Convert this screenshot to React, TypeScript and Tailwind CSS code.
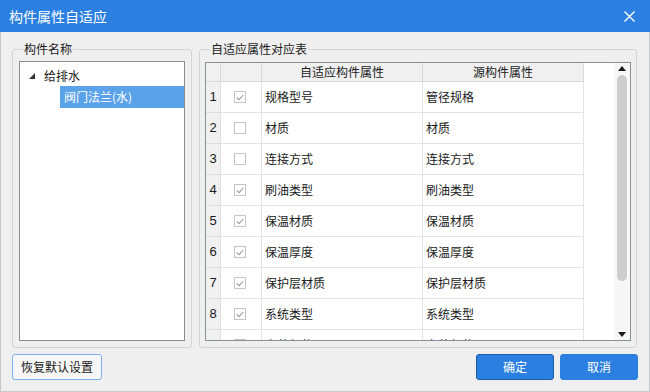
import React from "react";

const rows: { n: number; checked: boolean; target: string; source: string }[] = [
  { n: 1, checked: true, target: "规格型号", source: "管径规格" },
  { n: 2, checked: false, target: "材质", source: "材质" },
  { n: 3, checked: false, target: "连接方式", source: "连接方式" },
  { n: 4, checked: true, target: "刷油类型", source: "刷油类型" },
  { n: 5, checked: true, target: "保温材质", source: "保温材质" },
  { n: 6, checked: true, target: "保温厚度", source: "保温厚度" },
  { n: 7, checked: true, target: "保护层材质", source: "保护层材质" },
  { n: 8, checked: true, target: "系统类型", source: "系统类型" },
  { n: 9, checked: true, target: "安装部位", source: "安装部位" },
];

function CheckBox({ checked }: { checked: boolean }) {
  return (
    <div className="w-[12px] h-[12px] border border-[#c4c4c4] bg-white flex items-center justify-center">
      {checked && (
        <svg width="8" height="7" viewBox="0 0 8 7">
          <polyline points="0.8,3.4 3,5.6 7.2,1" fill="none" stroke="#9a9a9a" strokeWidth="1.1" />
        </svg>
      )}
    </div>
  );
}

export default function App() {
  return (
    <div className="w-[650px] h-[392px] bg-[#efefef] flex flex-col border-x border-b border-[#c3c8cf] text-[12px] text-[#1a1a1a] font-['Noto_Sans_CJK_SC',sans-serif]">
      {/* 标题栏 */}
      <div className="h-8 shrink-0 bg-[#2b7fe0] flex items-center justify-between pl-[9px] pr-[15px] -mx-px">
        <span className="text-white text-[14px]">构件属性自适应</span>
        <svg width="11" height="11" viewBox="0 0 11 11">
          <path d="M0.5 0.5 L10.5 10.5 M10.5 0.5 L0.5 10.5" stroke="white" strokeWidth="1.4" />
        </svg>
      </div>

      <div className="flex pt-2 pl-[11px] pr-[12px] gap-[7px]">
        {/* 构件名称 */}
        <fieldset className="w-[180px] h-[308px] border border-[#d4d4d4] rounded-[3px] pl-[6px] pr-[6px]">
          <legend className="ml-[4px] px-[1px] leading-[18px]">构件名称</legend>
          <div className="mt-[3px] h-[280px] bg-white border border-[#8c8c8c] pt-[4px]">
            <div className="h-[20px] flex items-center">
              <div className="w-[24px] flex justify-end pr-[9px]">
                <svg width="6" height="6" viewBox="0 0 6 6">
                  <polygon points="6,0 6,6 0,6" fill="#333" />
                </svg>
              </div>
              <span>给排水</span>
            </div>
            <div className="h-[22px] ml-[40px] bg-[#5aa2ea] text-white flex items-center pl-[4px]">
              阀门法兰(水)
            </div>
          </div>
        </fieldset>

        {/* 自适应属性对应表 */}
        <fieldset className="w-[438px] h-[308px] border border-[#d4d4d4] rounded-[3px] pl-[5px] pr-[5px]">
          <legend className="ml-[5px] px-[1px] leading-[18px]">自适应属性对应表</legend>
          <div className="mt-[4px] h-[279px] bg-white border border-[#8a8f99] flex overflow-hidden">
            <div className="flex-1 flex flex-col overflow-hidden">
              {/* 表头 */}
              <div className="h-[19px] shrink-0 flex">
                <div className="w-[15px] bg-[#f0f0f0] border-r border-b border-[#d6dae0]" />
                <div className="w-[41px] bg-[#f0f0f0] border-r border-b border-[#d6dae0]" />
                <div className="w-[161px] bg-[#f0f0f0] border-r border-b border-[#d6dae0] flex items-center justify-center">
                  自适应构件属性
                </div>
                <div className="w-[161px] bg-[#f0f0f0] border-r border-b border-[#d6dae0] flex items-center justify-center">
                  源构件属性
                </div>
              </div>
              {rows.map((r) => (
                <div key={r.n} className="h-[31px] shrink-0 flex">
                  <div className="w-[15px] bg-[#f0f0f0] border-r border-b border-[#dedede] flex items-center justify-center font-['Liberation_Sans',sans-serif] text-[13px]">
                    {r.n}
                  </div>
                  <div className="w-[41px] border-r border-b border-[#e3e3e3] flex items-center pl-[13px]">
                    <CheckBox checked={r.checked} />
                  </div>
                  <div className="w-[161px] border-r border-b border-[#e3e3e3] flex items-center pl-[3px]">
                    {r.target}
                  </div>
                  <div className="w-[161px] border-r border-b border-[#e3e3e3] flex items-center pl-[3px]">
                    {r.source}
                  </div>
                </div>
              ))}
            </div>
            {/* 滚动条 */}
            <div className="w-[16px] shrink-0 bg-[#f7f7f7] flex flex-col items-center pt-[3px] pb-[3px]">
              <svg width="8" height="5" viewBox="0 0 8 5">
                <polygon points="4,0 8,5 0,5" fill="#1a1a1a" />
              </svg>
              <div className="mt-[4px] w-[10px] h-[206px] rounded-[5px] bg-[#cdcdcd]" />
              <div className="flex-1" />
              <svg width="8" height="5" viewBox="0 0 8 5">
                <polygon points="0,0 8,0 4,5" fill="#1a1a1a" />
              </svg>
            </div>
          </div>
        </fieldset>
      </div>

      {/* 按钮 */}
      <div className="flex items-center mt-[6px] pl-[11px] pr-[11px]">
        <button className="w-[90px] h-[26px] bg-[#f7f7f7] border border-[#7ab0ec] rounded-[3px] text-[#1a1a1a]">
          恢复默认设置
        </button>
        <div className="flex-1" />
        <button className="w-[78px] h-[26px] bg-[#2b7fe0] border border-[#1c5aa6] rounded-[3px] text-white">
          确定
        </button>
        <button className="ml-[6px] w-[78px] h-[26px] bg-[#2b7fe0] border border-[#2b7fe0] rounded-[3px] text-white">
          取消
        </button>
      </div>
    </div>
  );
}
